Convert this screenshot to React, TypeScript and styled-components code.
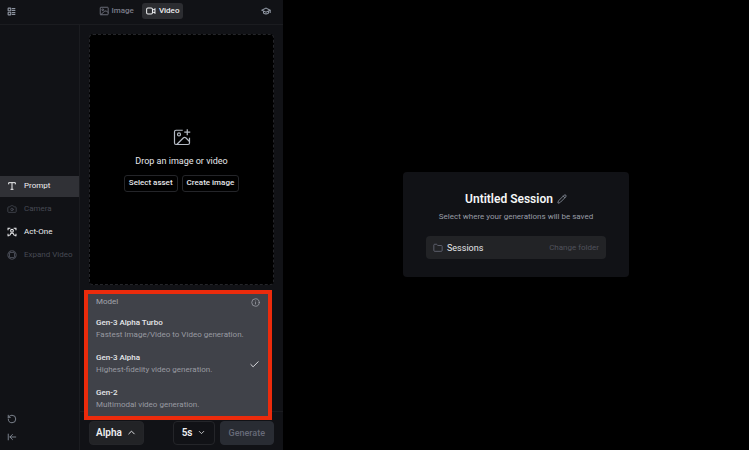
import React from "react";
import styled, { createGlobalStyle } from "styled-components";
import {
  ArrowLeftToLine,
  Camera,
  Check,
  ChevronDown,
  ChevronUp,
  Folder,
  Info,
  LayoutList,
  Pencil,
  RotateCcw,
} from "lucide-react";

const GlobalStyle = createGlobalStyle`
  *, *::before, *::after { box-sizing: border-box; }
  body {
    margin: 0;
    background: #000;
    color: #e6e7ea;
    font-family: Roboto, "Liberation Sans", sans-serif;
    font-size: 8px;
    line-height: 12px;
  }
  button {
    margin: 0;
    padding: 0;
    border: 0;
    background: none;
    color: inherit;
    font: inherit;
    cursor: pointer;
  }
  h1, h2, p, ul { margin: 0; padding: 0; font: inherit; }
  li { list-style: none; }
  svg { display: block; flex: none; }
`;

const Page = styled.div`
  display: grid;
  grid-template-columns: 283px 1fr;
  min-height: 100vh;
`;

const Panel = styled.aside`
  display: flex;
  flex-direction: column;
  background: #111216;
`;

const Header = styled.header`
  display: grid;
  grid-template-columns: 1fr auto 1fr;
  align-items: center;
  height: 25px;
  padding: 0 12px 2px 7px;
  border-bottom: 1px solid #1b1c20;
`;

const IconButton = styled.button<{ $end?: boolean }>`
  justify-self: ${(p) => (p.$end ? "end" : "start")};
  color: #8e95a1;
`;

const Tabs = styled.div`
  display: flex;
  gap: 4px;
`;

const Tab = styled.button<{ $active?: boolean }>`
  display: flex;
  align-items: center;
  gap: 3px;
  height: 16px;
  padding: 0 4px;
  border-radius: 3px;
  font-weight: 500;
  background: ${(p) => (p.$active ? "#2c2d31" : "transparent")};
  color: ${(p) => (p.$active ? "#eeeff1" : "#7b7d8a")};
`;

const Body = styled.div`
  display: grid;
  grid-template-columns: 80px 1fr;
  flex: 1;
`;

const Sidebar = styled.nav`
  display: flex;
  flex-direction: column;
  border-right: 1px solid #1b1c20;
  padding-bottom: 8px;
`;

const Tools = styled.div`
  display: flex;
  flex-direction: column;
  gap: 2px;
  margin: auto 0;
  padding-top: 2px;
`;

const Tool = styled.button<{ $active?: boolean; $muted?: boolean }>`
  display: flex;
  align-items: center;
  gap: 7px;
  height: 21px;
  padding-left: 7px;
  white-space: nowrap;
  background: ${(p) => (p.$active ? "#303136" : "transparent")};
  color: ${(p) => (p.$muted ? "#464953" : "#eeeff1")};
`;

const SidebarActions = styled.div`
  display: flex;
  flex-direction: column;
  align-items: flex-start;
  gap: 8px;
  padding-left: 7px;
`;

const Workspace = styled.section`
  display: flex;
  flex-direction: column;
`;

const DropZone = styled.div`
  display: flex;
  flex: 1;
  flex-direction: column;
  align-items: center;
  justify-content: center;
  margin: 9px 9px 0;
  border: 1px dashed #242529;
  border-radius: 4px;
  background: #000;
  svg { color: #b4bac4; }
`;

const DropLabel = styled.p`
  margin: 8px 0 7px;
  font-size: 9px;
  line-height: 14px;
`;

const DropActions = styled.div`
  display: flex;
  gap: 4px;
`;

const OutlineButton = styled.button`
  height: 17px;
  padding: 0 4px;
  border: 1px solid #242529;
  border-radius: 3px;
  font-weight: 500;
`;

const PromptArea = styled.div`
  position: relative;
  height: 126px;
`;

const ModelMenu = styled.section`
  position: absolute;
  z-index: 1;
  top: 5px;
  left: 4px;
  right: 11px;
  padding: 2px 8px 5px;
  border: 4px solid #ec2b0c;
  background: #404249;
`;

const MenuHeader = styled.div`
  display: flex;
  align-items: center;
  justify-content: space-between;
  margin-bottom: 9px;
  color: #a3a5ad;
`;

const ModelList = styled.ul`
  display: flex;
  flex-direction: column;
  gap: 11px;
`;

const Model = styled.button`
  display: flex;
  align-items: center;
  justify-content: space-between;
  width: 100%;
  text-align: left;
`;

const ModelName = styled.span`
  display: block;
  font-weight: 500;
`;

const ModelNote = styled.span`
  display: block;
  color: #989aa1;
`;

const Footer = styled.footer`
  display: flex;
  align-items: center;
  gap: 5px;
  height: 39px;
  padding: 3px 9px 0;
  border-top: 1px solid #1b1c20;
`;

const FooterButton = styled.button<{ $kind: "model" | "length" | "submit" }>`
  display: flex;
  align-items: center;
  justify-content: center;
  gap: 4px;
  height: 24px;
  padding: 0 ${(p) => (p.$kind === "model" ? 6 : 8)}px;
  margin-left: ${(p) => (p.$kind === "length" ? "auto" : "0")};
  border: 1px solid ${(p) => (p.$kind === "submit" ? "#292c33" : "#242529")};
  border-radius: 4px;
  background: ${(p) =>
    p.$kind === "model" ? "#222326" : p.$kind === "length" ? "#111216" : "#292c33"};
  color: ${(p) => (p.$kind === "submit" ? "#666a78" : "#eeeff1")};
  font-size: ${(p) => (p.$kind === "submit" ? 9 : 10)}px;
  font-weight: ${(p) => (p.$kind === "submit" ? 500 : 600)};
`;

const Main = styled.main`
  display: flex;
  align-items: center;
  justify-content: center;
  padding-bottom: 1px;
`;

const SessionCard = styled.section`
  display: flex;
  flex-direction: column;
  align-items: center;
  width: 226px;
  padding: 18px 23px;
  border-radius: 4px;
  background: #111216;
`;

const TitleRow = styled.div`
  display: flex;
  align-items: center;
  gap: 4px;
`;

const Title = styled.h1`
  color: #f5f6f7;
  font-size: 12px;
  line-height: 18px;
  font-weight: 600;
`;

const Hint = styled.p`
  margin: 3px 0 13px;
  color: #989ca6;
`;

const FolderRow = styled.div`
  display: flex;
  align-items: center;
  justify-content: space-between;
  width: 100%;
  height: 23px;
  padding: 0 7px;
  border-radius: 4px;
  background: #222326;
`;

const FolderName = styled.span`
  display: flex;
  align-items: center;
  gap: 4px;
  font-size: 9px;
  svg { color: #686a78; }
`;

const ChangeFolder = styled.button`
  color: #50525b;
`;

type GlyphProps = { size: number; children: React.ReactNode; weight?: number };

const Glyph = ({ size, children, weight = 2 }: GlyphProps) => (
  <svg
    width={size}
    height={size}
    viewBox="0 0 24 24"
    fill="none"
    stroke="currentColor"
    strokeWidth={weight}
    aria-hidden="true"
  >
    {children}
  </svg>
);

const PictureIcon = () => (
  <Glyph size={10}>
    <rect x="3" y="3" width="19" height="18" rx="1.5" />
    <circle cx="9" cy="9" r="2" />
    <path d="M4 21 L14 12 H18 L22 16" />
  </Glyph>
);

const VideoIcon = () => (
  <Glyph size={10} weight={2.5}>
    <rect x="1.5" y="5" width="14" height="14" rx="3" />
    <path d="M16 10 L21.5 7 V17 L16 14" />
  </Glyph>
);

const CapIcon = () => (
  <Glyph size={10} weight={2.6}>
    <path d="M2 10 L12 5 L22 10 L12 15 Z M6 12.5 V17 Q12 21 18 17 V12.5 M22 10 V17" />
  </Glyph>
);

const TextIcon = () => (
  <Glyph size={10} weight={2.4}>
    <path d="M4 8 V4 H20 V8 M12 4 V20 M8.5 20 H15.5" />
  </Glyph>
);

const ActorIcon = () => (
  <Glyph size={10} weight={2.5}>
    <path d="M2.5 8 V3 H8 M16 3 H21.5 V8 M2.5 16 V21 H5 M19 21 H21.5 V16" />
    <circle cx="12" cy="9" r="3.3" />
    <path d="M6 21 L9.5 15 H14.5 L18 21" />
  </Glyph>
);

const ExpandIcon = () => (
  <Glyph size={10} weight={2.5}>
    <circle cx="12" cy="12" r="10" />
    <rect x="6" y="6" width="12" height="12" rx="2" />
    <path d="M8 2.8 V6 M16 2.8 V6 M8 18 V21.2 M16 18 V21.2 M2.8 8 H6 M2.8 16 H6 M18 8 H21.2 M18 16 H21.2" />
  </Glyph>
);

const AddPictureIcon = () => (
  <Glyph size={18} weight={1.6}>
    <path d="M13 3 H4 Q2 3 2 5 V20 Q2 22 4 22 H20 Q22 22 22 20 V13" />
    <circle cx="8" cy="8.5" r="2" />
    <path d="M5 22 L14 13 Q15.5 11.8 17 13 L22 18 M19 1.5 V9.5 M15 5.5 H23" />
  </Glyph>
);

const models = [
  { name: "Gen-3 Alpha Turbo", note: "Fastest Image/Video to Video generation." },
  { name: "Gen-3 Alpha", note: "Highest-fidelity video generation.", selected: true },
  { name: "Gen-2", note: "Multimodal video generation." },
];

export default function App() {
  return (
    <>
      <GlobalStyle />
      <Page>
        <Panel>
          <Header>
            <IconButton aria-label="Layout">
              <LayoutList size={9} strokeWidth={3} />
            </IconButton>
            <Tabs>
              <Tab>
                <PictureIcon />
                Image
              </Tab>
              <Tab $active>
                <VideoIcon />
                Video
              </Tab>
            </Tabs>
            <IconButton $end aria-label="Tutorials">
              <CapIcon />
            </IconButton>
          </Header>
          <Body>
            <Sidebar>
              <Tools>
                <Tool $active>
                  <TextIcon />
                  Prompt
                </Tool>
                <Tool $muted>
                  <Camera size={10} />
                  Camera
                </Tool>
                <Tool>
                  <ActorIcon />
                  Act-One
                </Tool>
                <Tool $muted>
                  <ExpandIcon />
                  Expand Video
                </Tool>
              </Tools>
              <SidebarActions>
                <IconButton aria-label="Reset">
                  <RotateCcw size={10} />
                </IconButton>
                <IconButton aria-label="Collapse">
                  <ArrowLeftToLine size={10} />
                </IconButton>
              </SidebarActions>
            </Sidebar>
            <Workspace>
              <DropZone>
                <AddPictureIcon />
                <DropLabel>Drop an image or video</DropLabel>
                <DropActions>
                  <OutlineButton>Select asset</OutlineButton>
                  <OutlineButton>Create image</OutlineButton>
                </DropActions>
              </DropZone>
              <PromptArea>
                <ModelMenu>
                  <MenuHeader>
                    <h2>Model</h2>
                    <Info size={9} />
                  </MenuHeader>
                  <ModelList>
                    {models.map((m) => (
                      <li key={m.name}>
                        <Model aria-pressed={!!m.selected}>
                          <span>
                            <ModelName>{m.name}</ModelName>
                            <ModelNote>{m.note}</ModelNote>
                          </span>
                          {m.selected && <Check size={11} />}
                        </Model>
                      </li>
                    ))}
                  </ModelList>
                </ModelMenu>
              </PromptArea>
              <Footer>
                <FooterButton $kind="model">
                  Alpha
                  <ChevronUp size={11} />
                </FooterButton>
                <FooterButton $kind="length">
                  5s
                  <ChevronDown size={9} />
                </FooterButton>
                <FooterButton $kind="submit">Generate</FooterButton>
              </Footer>
            </Workspace>
          </Body>
        </Panel>
        <Main>
          <SessionCard>
            <TitleRow>
              <Title>Untitled Session</Title>
              <IconButton aria-label="Rename session">
                <Pencil size={10} />
              </IconButton>
            </TitleRow>
            <Hint>Select where your generations will be saved</Hint>
            <FolderRow>
              <FolderName>
                <Folder size={10} />
                Sessions
              </FolderName>
              <ChangeFolder>Change folder</ChangeFolder>
            </FolderRow>
          </SessionCard>
        </Main>
      </Page>
    </>
  );
}
